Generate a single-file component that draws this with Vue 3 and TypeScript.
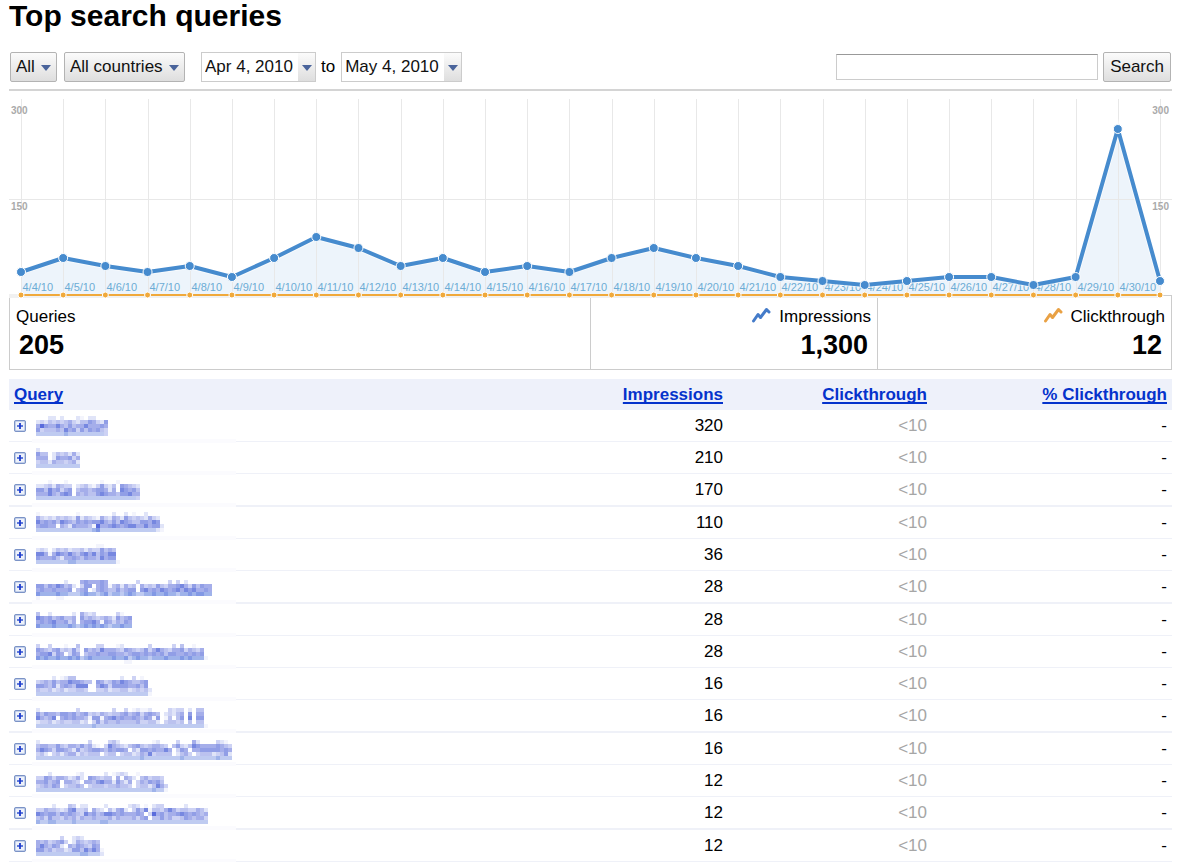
<script setup lang="ts">
import { ref } from 'vue'

interface QueryRow {
  impressions: string
  top: number
  thick?: boolean
  cells: string[]
}

const search = ref('')

// Daily impressions, in chart units from the baseline
const levels = [23, 37, 29, 23, 29, 18, 37, 58, 47, 29, 37, 23, 29, 23, 37, 47, 37, 29, 18, 14, 10, 14, 18, 18, 10, 18, 166, 14]
const base = 196
const left = 12
const step = 1139 / 27
const points = levels.map((v, i) => ({
  x: left + i * step,
  line: Math.round(left + i * step) + 0.5,
  y: base - v,
  label: `4/${i + 4}/10`,
}))
const linePath = points.map((p) => `${p.x.toFixed(1)},${p.y}`).join(' ')
const areaPath = `${points[0].x},${base} ${linePath} ${points[27].x},${base}`

// Pixelated query names: every digit is the darkness of one 4px cell, u, v and w belong to the underline
const shades: Record<string, string> = {
  '1': '#f3f4fc',
  '2': '#e0e4f8',
  '3': '#cdd2f4',
  '4': '#bbc2ef',
  '5': '#a5aeea',
  '6': '#919ee6',
  '7': '#7687e0',
  '8': '#596bdc',
  u: '#bfcbf1',
  v: '#9fb3ea',
  w: '#8299e5',
}

const rows: QueryRow[] = [
  { impressions: '320', top: 6, cells: ['000220200021022000', '232434345324465326', '586557546455755565', '634445475636465643', 'uuuuuuuvuuuuuuuuu3'] },
  { impressions: '210', top: 6, cells: ['20000000000', '64402434252', '55502655635', '34425443452', 'uuuuuuuuuuu'] },
  { impressions: '170', top: 6, thick: true, cells: ['00010001000000001000100000', '22342543302342136324065432', '66475635604554566525076564', '55575467605454467655466755', 'uuuuuuuuuuuuuuuuuuuuuuuuu3'] },
  { impressions: '110', top: 5, cells: ['10000000001000000002002010020000', '53232434326243215325426434325320', '75656476546565667546476544665760', '56655054265554185567656775575662', 'uuuuuuuuuuuuuuvwuuuuuuuuuuuuuu21'] },
  { impressions: '36', top: 5, cells: ['000000000000000110000', '232024342334243364540', '775157657546757465770', '655564255654655475660', 'uuuuuuuuvvuuuuuuuuuu1'] },
  { impressions: '28', top: 9, thick: true, cells: ['00000002000565556500000003000000030302000000', '66465764520366056514525340534364355675364655', '56556555604560256544645660675657656757675565', 'wvvvvwvvuuuvwvvuvwuvvuvwvuuvvwvvwvvuvvwvwwvv', '10000110000000000000000000000000000000000000'] },
  { impressions: '28', top: 8, cells: ['400200000205323000003100', '765645644506454345426456', '565675563505667516535465', 'wvvvwvvvwvuvwvwvwvuvvwvv'] },
  { impressions: '28', top: 8, cells: ['3003000100400003300012000000300000304001000', '6543563436306454755543654346357543556354350', '5667365036504556556655456656565646655656560', 'wvwvvwvvwvwuvwvvvvvwvvwuvwvvuvvvwvvvwvwvvv1', '0000000000000000000000110000000000000000000'] },
  { impressions: '16', top: 8, cells: ['00002012440000000000020030100', '34546455766544065346576544560', '66546256547770057636666556460', '43342342334430033423344234342', 'uuuuuuuuuuuuuuuuuuuuuuuuuuuu1'] },
  { impressions: '16', top: 8, thick: true, cells: ['200000000030000000030030121120000323302044', '646554665645634354344564563565402324506055', '754570565655416615675655654651601404607066', '233423433442303635445444453344203443404044', 'uuuuuuuuuuuuuuvuuuuuuuuuuuuuuuuuuuuuuuuuuu1'] },
  { impressions: '16', top: 7, cells: ['2000000000000300003420000000012000030005200003210', '4554464355464521037543245643455430463247655556543', '5765366542634566546566504266565575036505566666565', '3420342455243444034403442354734444024530344423462', 'uuuuuuuuuuuuuuuuuuuuuuuuuuvuuuuuuuuuvuuuuuuuuvuuu'] },
  { impressions: '12', top: 7, cells: ['000200000012000002012320010000000', '336535542352065434405054204534430', '556456055430554675526425035465640', '345465034454034443445443034424753', 'uuuuuuuuuuuuuuuuuuuuuuuuuuuuuvuu1'] },
  { impressions: '12', top: 7, thick: true, cells: ['0000200043022000020000023201023300000200000', '3354432367334053204256203647144357534433542', '7656646565437564577656555650385645567656545', '4536443545354454445354445356044645334654553', 'vuuvvuuuuvuuuuuuvvuuuuuuuuuuuuuuuuuuuuuuuuu'] },
  { impressions: '12', top: 6, cells: ['00000030023200000', '54534563025434540', '57546520546543650', '66453442366475751', 'uuuuuuuuuuuvvuuu2'] },
]
</script>

<template>
  <main class="page">
    <h1>Top search queries</h1>

    <form class="toolbar" @submit.prevent>
      <span class="picker">
        <select aria-label="Search type"><option>All</option></select>
        <svg class="arrow" viewBox="0 0 10 6"><path d="M0 0H10L5 6Z" /></svg>
      </span>
      <span class="picker">
        <select aria-label="Country"><option>All countries</option></select>
        <svg class="arrow" viewBox="0 0 10 6"><path d="M0 0H10L5 6Z" /></svg>
      </span>
      <span class="picker date from">
        <select aria-label="Start date"><option>Apr 4, 2010</option></select>
        <svg class="arrow" viewBox="0 0 10 6"><path d="M0 0H10L5 6Z" /></svg>
      </span>
      <span class="to">to</span>
      <span class="picker date">
        <select aria-label="End date"><option>May 4, 2010</option></select>
        <svg class="arrow" viewBox="0 0 10 6"><path d="M0 0H10L5 6Z" /></svg>
      </span>
      <input v-model="search" class="search-box" type="text" aria-label="Search queries" />
      <button class="search-button" type="submit">Search</button>
    </form>

    <svg class="chart" viewBox="0 0 1163 200" role="img" aria-label="Impressions and clickthrough per day">
      <rect x="0" y="195" width="1152" height="4" fill="#f1f1f1" />
      <polygon :points="areaPath" fill="#edf4fb" />
      <g stroke="#e8e8e8">
        <line x1="0" y1="100.5" x2="1163" y2="100.5" />
        <line v-for="p in points" :key="p.label" :x1="p.line" y1="0" :x2="p.line" y2="196" />
      </g>
      <g class="scale">
        <text x="2" y="15">300</text>
        <text x="2" y="111">150</text>
        <text x="1160" y="15" text-anchor="end">300</text>
        <text x="1160" y="111" text-anchor="end">150</text>
      </g>
      <g class="dates">
        <text v-for="p in points.slice(0, 27)" :key="p.label" :x="p.line + 1" y="192">{{ p.label }}</text>
      </g>
      <polyline :points="linePath" fill="none" stroke="#fff" stroke-width="6" stroke-opacity="0.6" />
      <polyline :points="linePath" fill="none" stroke="#468bce" stroke-width="4" stroke-linejoin="round" />
      <circle v-for="p in points" :key="p.label" :cx="p.x" :cy="p.y" r="4.5" fill="#468bce" stroke="#fff" stroke-width="1" />
      <line x1="12" y1="196" x2="1151" y2="196" stroke="#f0a93b" stroke-width="2" />
      <circle v-for="p in points" :key="p.label" :cx="p.x" cy="196" r="3" fill="#f0a93b" stroke="#fff" stroke-width="1" />
    </svg>

    <section class="summary">
      <div class="stat first">
        <span class="stat-label">Queries</span>
        <strong>205</strong>
      </div>
      <div class="stat impressions">
        <span class="stat-label">
          <svg class="trend" viewBox="0 0 20 16"><path d="M2.5 14L7 7.5L9.5 10.5L15.5 2.5L18 5" stroke="#447bc9" /></svg>
          Impressions
        </span>
        <strong>1,300</strong>
      </div>
      <div class="stat clicks">
        <span class="stat-label">
          <svg class="trend" viewBox="0 0 20 16"><path d="M2.5 14L7 7.5L9.5 10.5L15.5 2.5L18 5" stroke="#e9a144" /></svg>
          Clickthrough
        </span>
        <strong>12</strong>
      </div>
    </section>

    <table>
      <colgroup>
        <col />
        <col class="c-impressions" />
        <col class="c-clicks" />
        <col class="c-percent" />
      </colgroup>
      <thead>
        <tr>
          <th class="name" scope="col"><a href="#query">Query</a></th>
          <th scope="col"><a href="#impressions">Impressions</a></th>
          <th scope="col"><a href="#clickthrough">Clickthrough</a></th>
          <th scope="col"><a href="#percent">% Clickthrough</a></th>
        </tr>
      </thead>
      <tbody>
        <tr v-for="(row, i) in rows" :key="i" :class="{ thick: row.thick }">
          <td class="name">
            <div class="query">
              <button class="expand" type="button" aria-label="Expand query">
                <svg viewBox="0 0 12 12">
                  <rect x="1" y="1" width="10" height="10" rx="1" fill="#eef2fa" stroke="#c3d0ea" stroke-width="2" />
                  <rect x="0.5" y="0.5" width="11" height="11" rx="1.5" fill="none" stroke="#7b93c6" />
                  <path d="M3 6H9" stroke="#3a5bd6" stroke-width="1.6" />
                  <path d="M6 3V9" stroke="#1f3bcc" stroke-width="1.8" />
                </svg>
              </button>
              <a href="#details" aria-label="Query details">
                <svg class="mosaic" viewBox="0 0 204 32" shape-rendering="crispEdges">
                  <g v-for="(line, y) in row.cells" :key="y">
                    <template v-for="(cell, x) in line" :key="x">
                      <rect v-if="cell !== '0'" :x="4 + x * 4" :y="row.top + y * 4" width="4" height="4" :fill="shades[cell]" />
                    </template>
                  </g>
                </svg>
              </a>
            </div>
          </td>
          <td>{{ row.impressions }}</td>
          <td class="muted">&lt;10</td>
          <td>-</td>
        </tr>
      </tbody>
    </table>
  </main>
</template>

<style>
body {
  margin: 0;
  background: #fff;
}
</style>

<style scoped>
.page {
  padding: 0 7px 0 9px;
  font-family: "Liberation Sans", Arial, sans-serif;
  font-size: 17px;
  line-height: 20px;
  color: #000;
}

h1 {
  margin: 0 0 20px;
  font-size: 30px;
  line-height: 32px;
}

.toolbar {
  display: flex;
  align-items: center;
  height: 30px;
  padding: 0 1px 7px;
  border-bottom: 2px solid #d4d4d4;
}

.picker {
  position: relative;
  margin-right: 7px;
}

.picker select {
  display: block;
  box-sizing: border-box;
  height: 30px;
  margin: 0;
  padding: 0 21px 0 5px;
  border: 1px solid #b3b3b3;
  border-radius: 2px;
  background: linear-gradient(#fbfbfb, #dedede);
  font: inherit;
  color: #111;
  appearance: none;
}

.picker.date {
  margin-right: 0;
}

.picker.date select {
  padding: 0 22px 0 3px;
  border-color: #ccc;
  border-radius: 0;
  background: linear-gradient(#fbfbfb, #dedede) right / 17px 100% no-repeat #fff;
}

.picker.from {
  margin-left: 9px;
}

.arrow {
  position: absolute;
  top: 13px;
  right: 6px;
  width: 10px;
  height: 6px;
  fill: #4a649b;
  pointer-events: none;
}

.date .arrow {
  right: 4px;
}

.to {
  padding: 0 6px 0 5px;
}

.search-box {
  box-sizing: border-box;
  width: 262px;
  height: 26px;
  margin: 0 5px 0 auto;
  padding: 0 4px;
  border: 1px solid #ccc;
  border-top-color: #999;
  font: inherit;
}

.search-button {
  height: 30px;
  padding: 0 6px;
  border: 1px solid #b3b3b3;
  border-radius: 2px;
  background: linear-gradient(#fbfbfb, #dedede);
  font: inherit;
  color: #111;
}

.chart {
  position: relative;
  display: block;
  width: 100%;
  margin-top: 8px;
}

.scale {
  font-size: 10px;
  font-weight: bold;
  fill: #aaa;
}

.dates {
  font-size: 11px;
  fill: #6cacd5;
}

.summary {
  display: flex;
  margin-top: -4px;
  border: 1px solid #ccc;
}

.stat {
  box-sizing: border-box;
  display: flex;
  flex-direction: column;
  align-items: flex-end;
  height: 73px;
  padding: 11px 6px 0;
}

.stat + .stat {
  border-left: 1px solid #ccc;
}

.stat.first {
  flex: 1;
  align-items: flex-start;
}

.stat.impressions {
  width: 287px;
}

.stat.clicks {
  width: 294px;
}

.stat-label {
  display: flex;
  align-items: flex-start;
}

.stat strong {
  padding: 0 3px;
  font-size: 27px;
  line-height: 36px;
}

.trend {
  width: 20px;
  height: 16px;
  margin-right: 8px;
  fill: none;
  stroke-width: 3;
  stroke-linecap: round;
  stroke-linejoin: round;
}

table {
  width: 100%;
  margin-top: 9px;
  border-collapse: separate;
  border-spacing: 0;
  table-layout: fixed;
}

.c-impressions {
  width: 150px;
}

.c-clicks {
  width: 204px;
}

.c-percent {
  width: 240px;
}

th,
td {
  padding: 0 5px;
  text-align: right;
}

th {
  height: 31px;
  background: #eef1fa;
}

th a {
  color: #0533cc;
  text-decoration: underline;
  text-decoration-thickness: 2px;
  text-underline-offset: 2px;
  text-decoration-skip-ink: none;
}

td {
  height: 31px;
  border-bottom: 1px solid #eff1f8;
}

.thick td {
  border-bottom-width: 2px;
}

.name {
  text-align: left;
}

.query {
  position: relative;
  display: flex;
  align-items: center;
  height: 31px;
}

.query::after {
  content: "";
  position: absolute;
  left: 18px;
  bottom: -2px;
  width: 204px;
  height: 4px;
  background: #fbfbfe;
}

.expand {
  width: 12px;
  height: 12px;
  margin-right: 6px;
  padding: 0;
  border: 0;
  background: none;
}

.expand svg {
  display: block;
  width: 12px;
  height: 12px;
}

.mosaic {
  display: block;
  width: 204px;
  height: 32px;
}

.muted {
  color: #a6a6a6;
}
</style>
